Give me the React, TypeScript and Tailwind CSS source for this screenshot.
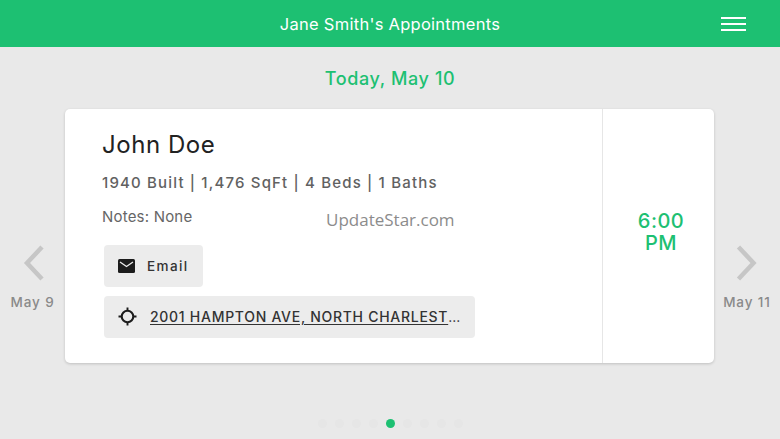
const font = { fontFamily: "Inter, 'Noto Sans', sans-serif" }

function Dots() {
  const dots = [0, 1, 2, 3, 4, 5, 6, 7, 8]
  return (
    <div className="flex items-center justify-center gap-[8px] h-[9px]">
      {dots.map((d) => (
        <div
          key={d}
          className={d === 4 ? "w-[9px] h-[9px] rounded-full bg-[#1dc072]" : "w-[9px] h-[9px] rounded-full bg-[#e6e6e6]"}
        />
      ))}
    </div>
  )
}

function DayNav({ dir, label, width }: { dir: "left" | "right"; label: string; width: string }) {
  return (
    <div className={"shrink-0 flex flex-col items-center pt-[135px] " + width}>
      <svg width="24" height="38" viewBox="0 0 24 38" fill="none">
        <path
          d={dir === "left" ? "M21 3 L6 19 L21 35" : "M3.5 3 L18.5 19 L3.5 35"}
          stroke="#c6c6c6"
          strokeWidth="4.5"
        />
      </svg>
      <div className="mt-[12px] text-[13.5px] leading-[16px] font-medium tracking-[0.9px] text-[#8a8a8a] whitespace-nowrap">
        {label}
      </div>
    </div>
  )
}

export default function App() {
  return (
    <div className="w-[780px] h-[439px] relative overflow-hidden bg-[#e9e9e9] flex flex-col" style={font}>
      {/* Header */}
      <header className="h-[47px] shrink-0 bg-[#1dc072] text-white relative flex items-center justify-center">
        <h1 className="text-[16.5px] leading-[24px] mt-[1px] tracking-[0.27px] font-normal">Jane Smith's Appointments</h1>
        <div className="absolute right-[34px] top-[17px] w-[25px] flex flex-col gap-[4px]">
          <div className="h-[2px] bg-white" />
          <div className="h-[2px] bg-white" />
          <div className="h-[2px] bg-white" />
        </div>
      </header>

      <div className="h-[62px] shrink-0 flex items-center justify-center pt-[1px]">
        <div className="text-[18px] font-medium tracking-[0.6px] text-[#1dc072]">Today, May 10</div>
      </div>

      <div className="flex items-start">
        <DayNav dir="left" label="May 9" width="w-[65px]" />

        {/* Appointment card */}
        <div className="w-[649px] h-[254px] shrink-0 bg-white rounded-[5px] shadow-[0_1px_3px_rgba(0,0,0,0.18)] flex">
          <div className="w-[538px] shrink-0 border-r border-[#e6e6e6] pl-[37px] pt-[21px]">
            <div className="text-[24px] leading-[30px] tracking-[0.55px] text-[#222222]">John Doe</div>
            <div className="mt-[13px] text-[15px] leading-[20px] font-medium tracking-[1.17px] text-[#616161]">
              1940 Built | 1,476 SqFt | 4 Beds | 1 Baths
            </div>
            <div className="mt-[14px] text-[15px] leading-[20px] tracking-[0.2px] text-[#666666]">Notes: None</div>
            <div className="mt-[18px] ml-[2px] w-[99px] h-[42px] rounded-[4px] bg-[#ececec] flex items-center pl-[14px]">
              <svg width="17" height="14" viewBox="0 0 17 14">
                <rect width="17" height="14" rx="1.5" fill="#1c1c1c" />
                <path d="M2 3 L8.5 7.5 L15 3" stroke="#ececec" strokeWidth="1.3" fill="none" />
              </svg>
              <span className="ml-[12px] text-[13.5px] font-medium tracking-[1.4px] text-[#333333]">Email</span>
            </div>
            <div className="mt-[9px] ml-[2px] w-[371px] h-[42px] rounded-[4px] bg-[#ececec] flex items-center pl-[14px] pb-[1px]">
              <svg width="19" height="19" viewBox="0 0 19 19" fill="none" stroke="#1c1c1c">
                <circle cx="9.5" cy="9.5" r="5.8" strokeWidth="2.1" />
                <path d="M9.5 0.5 V4 M9.5 15 V18.5 M0.5 9.5 H4 M15 9.5 H18.5" strokeWidth="1.9" />
              </svg>
              <span className="ml-[13px] text-[14px] font-medium tracking-[0.72px] text-[#333333] whitespace-nowrap underline underline-offset-[2px]">
                2001 HAMPTON AVE, NORTH CHARLEST
              </span>
              <span className="text-[14px] text-[#333333]">...</span>
            </div>
          </div>
          <div className="flex-1 flex items-center justify-center pl-[5px] pt-[1px] pb-[10px]">
            <div className="text-center text-[20px] leading-[22px] font-medium tracking-[0.45px] text-[#1dc072]">
              6:00
              <br />
              PM
            </div>
          </div>
        </div>

        <DayNav dir="right" label="May 11" width="w-[66px]" />
      </div>

      <div className="mt-[56px]">
        <Dots />
      </div>

      {/* watermark */}
      <div className="absolute left-[326px] top-[208px] text-[17px] leading-[24px] text-[#8c8c8c]" style={{ fontFamily: "'Open Sans', sans-serif" }}>
        UpdateStar.com
      </div>
    </div>
  )
}
